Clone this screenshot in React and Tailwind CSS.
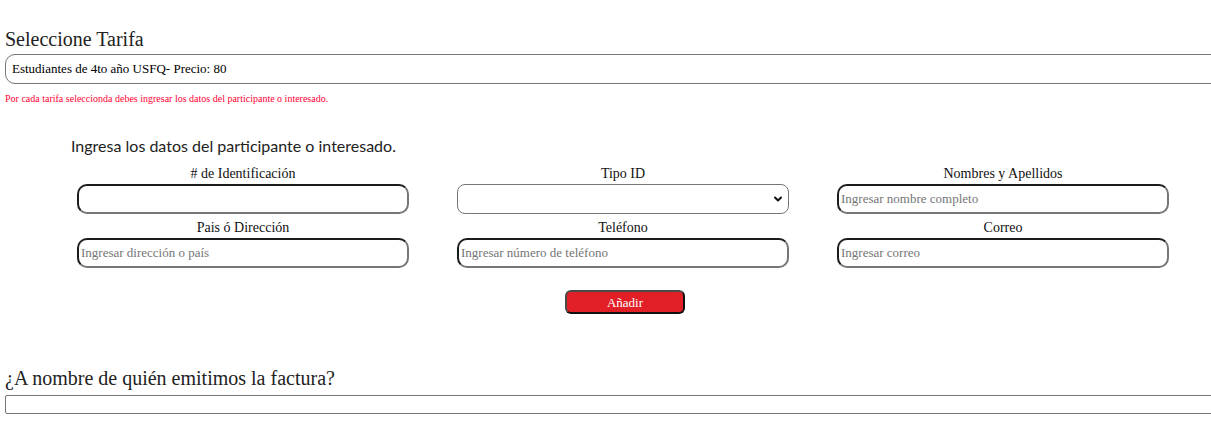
import { useState } from 'react';

const serif = { fontFamily: '"Liberation Serif", "Times New Roman", serif' };

function Field({ label, placeholder }) {
  return (
    <div className="flex flex-col">
      <label className="h-5 text-center text-[14px] leading-5 text-[#111]">{label}</label>
      <input
        type="text"
        placeholder={placeholder}
        className="h-[30px] w-full rounded-[10px] border-2 border-t-[#1c1c1c] border-l-[#1c1c1c] border-b-[#767676] border-r-[#767676] bg-white px-[2px] text-[13px] text-black outline-none placeholder:text-[#757575]"
      />
    </div>
  );
}

function TipoSelect() {
  return (
    <div className="flex flex-col">
      <label className="h-5 text-center text-[14px] leading-5 text-[#111]">Tipo ID</label>
      <div className="flex h-[30px] w-full items-center justify-end rounded-[8px] border border-[#767676] bg-white pr-[5px]">
        <svg className="h-[10px] w-[10px] text-[#111]" viewBox="0 0 10 10" fill="none" stroke="currentColor" strokeWidth="2" strokeLinecap="round" strokeLinejoin="round">
          <path d="M2 3.5l3 3 3-3" />
        </svg>
      </div>
    </div>
  );
}

export default function App() {
  const [tarifa] = useState('Estudiantes de 4to año USFQ- Precio: 80');

  return (
    <div className="min-h-[436px] w-full overflow-hidden bg-white pl-[5px]" style={serif}>
      <h2 className="pt-[28px] text-[20px] leading-[23px] text-[#222]">Seleccione Tarifa</h2>
      <div className="mt-[3px] flex h-[30px] w-[1240px] items-center rounded-[10px] border border-[#767676] bg-white pl-[6px] text-[13px] text-black">
        {tarifa}
      </div>
      <p className="mt-[9px] text-[10px] leading-[11px] text-[#ff0033]">
        Por cada tarifa seleccionda debes ingresar los datos del participante o interesado.
      </p>

      <div className="mt-[32px] pl-[66px] text-[16px] leading-[20px] text-[#222]" style={{ fontFamily: 'Lato, "Noto Sans", sans-serif' }}>
        Ingresa los datos del participante o interesado.
      </div>

      <div className="mt-[8px] ml-[72px] grid w-[1092px] grid-cols-3 gap-x-[48px] gap-y-[4px]">
        <Field label="# de Identificación" placeholder="" />
        <TipoSelect />
        <Field label="Nombres y Apellidos" placeholder="Ingresar nombre completo" />
        <Field label="Pais ó Dirección" placeholder="Ingresar dirección o país" />
        <Field label="Teléfono" placeholder="Ingresar número de teléfono" />
        <Field label="Correo" placeholder="Ingresar correo" />
      </div>

      <div className="mt-[22px] flex w-[1166px] justify-center pl-[74px]">
        <button className="h-[24px] w-[120px] rounded-[6px] border-2 border-t-[#4a4a4a] border-l-[#4a4a4a] border-b-[#111] border-r-[#111] bg-[#e21f26] text-[13px] leading-none text-white">
          Añadir
        </button>
      </div>

      <h2 className="mt-[53px] text-[20px] leading-[23px] text-[#222]">¿A nombre de quién emitimos la factura?</h2>
      <input
        type="text"
        className="mt-[5px] block h-[19px] w-[1240px] rounded-[2px] border border-[#767676] bg-white outline-none"
      />
    </div>
  );
}
